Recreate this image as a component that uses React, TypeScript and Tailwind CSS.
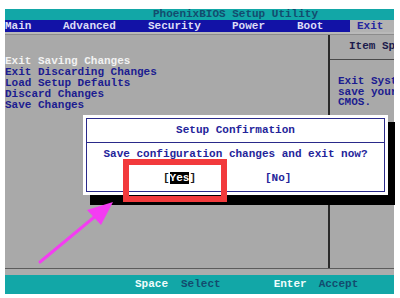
const MENU = [
  { label: "Main", w: "w-[58px]" },
  { label: "Advanced", w: "w-[85px]" },
  { label: "Security", w: "w-[84px]" },
  { label: "Power", w: "w-[65px]" },
  { label: "Boot", w: "w-[53px]" },
];

const ITEMS = [
  "Exit Saving Changes",
  "Exit Discarding Changes",
  "Load Setup Defaults",
  "Discard Changes",
  "Save Changes",
];

const mono = { fontFamily: "'Liberation Mono', 'DejaVu Sans Mono', monospace" };

export default function App() {
  return (
    <div
      className="relative w-[400px] h-[298px] bg-white overflow-hidden pt-[9px] pl-[5px] font-bold text-[11px] leading-[11px]"
      style={mono}
    >
      <div className="w-[389px] flex flex-col">
        {/* Title */}
        <div className="h-[11px] bg-[#12a7a7] flex items-center text-[#134c6e] pl-[148px] whitespace-nowrap">
          PhoenixBIOS Setup Utility
        </div>

        {/* Menu */}
        <div className="h-[12px] bg-[#1212a6] flex items-center">
          {MENU.map((m) => (
            <div key={m.label} className={`${m.w} text-[#dcdcf6] whitespace-nowrap`}>
              {m.label}
            </div>
          ))}
          <div className="flex-1 h-full bg-[#b2b2b2] text-[#2424a0] flex items-center pl-[7px]">Exit</div>
        </div>

        <div className="h-[3px] bg-[#b9b9b9] border-b border-[#8c8c8c]" />

        {/* Body */}
        <div className="h-[233px] flex bg-[#a9a9a9]">
          <div className="flex-1 pt-[21px] flex flex-col">
            {ITEMS.map((t, i) => (
              <div key={t} className={i === 0 ? "text-[#f2f2f2]" : "text-[#1c1c90]"}>
                {t}
              </div>
            ))}
          </div>
          <div className="w-[66px] border-l-2 border-[#2a2a2a] flex flex-col overflow-hidden whitespace-nowrap">
            <div className="h-[25px] border-b border-[#4a4a4a] pl-[19px] pt-[6px] text-[#1c1c4c]">Item Sp</div>
            <div className="pl-[8px] pt-[16px] text-[#1c1c90] leading-[10.5px]">
              <div>Exit Syst</div>
              <div>save your</div>
              <div>CMOS.</div>
            </div>
          </div>
        </div>

        <div className="h-[1px] bg-[#5c5c5c]" />
        <div className="h-[6px] bg-[#acacac]" />

        {/* Footer */}
        <div className="h-[19px] bg-[#12a7a7] flex items-center whitespace-nowrap">
          <span className="ml-[130px] text-[#eefcfc]">Space</span>
          <span className="ml-[13px] text-[#134c6e]">Select</span>
          <span className="ml-[53px] text-[#eefcfc]">Enter</span>
          <span className="ml-[12px] text-[#134c6e]">Accept</span>
        </div>
      </div>

      {/* Dialog shadow */}
      <div className="absolute left-[90px] top-[122px] w-[305px] h-[83px] bg-black" />

      {/* Dialog */}
      <div className="absolute left-[83px] top-[115px] w-[305px] h-[80px] bg-white p-[3px]">
        <div className="h-full border border-[#2a2a8a] flex flex-col">
          <div className="h-[24px] border-b border-[#2a2a8a] flex items-center justify-center text-[#24249a]">
            Setup Confirmation
          </div>
          <div className="flex-1 flex flex-col pt-[6px] text-[#24249a]">
            <div className="text-center">Save configuration changes and exit now?</div>
            <div className="flex mt-[13px] ml-[76px]">
              <span className="w-[102px] text-[#1a1a1a]">
                [<span className="bg-black text-white">Yes</span>]
              </span>
              <span>[No]</span>
            </div>
          </div>
        </div>
      </div>

      {/* Red highlight */}
      <div className="absolute left-[123px] top-[159px] w-[104px] h-[43px] border-[6px] border-[#f23a3c]" />

      {/* Arrow */}
      <svg className="absolute left-0 top-0" width="400" height="298" viewBox="0 0 400 298">
        <line x1="40" y1="262" x2="98" y2="214" stroke="#f43cf2" strokeWidth="3" strokeLinecap="round" />
        <polygon points="113,202 87,210 101,225" fill="#f43cf2" />
      </svg>
    </div>
  );
}
